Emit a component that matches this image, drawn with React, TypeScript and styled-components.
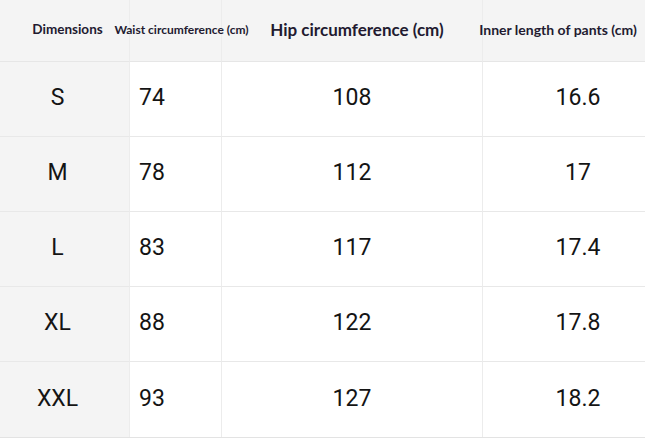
import { Fragment } from 'react'
import styled, { createGlobalStyle } from 'styled-components'

const Global = createGlobalStyle`
  html, body {
    margin: 0;
    padding: 0;
    background: #ffffff;
  }
`

const rows = [
  { size: 'S', waist: '74', hip: '108', inner: '16.6' },
  { size: 'M', waist: '78', hip: '112', inner: '17' },
  { size: 'L', waist: '83', hip: '117', inner: '17.4' },
  { size: 'XL', waist: '88', hip: '122', inner: '17.8' },
  { size: 'XXL', waist: '93', hip: '127', inner: '18.2' },
]

const Table = styled.div`
  width: 645px;
  display: grid;
  grid-template-columns: 130px 92px 261px 162px;
  grid-template-rows: 62px repeat(5, 75px);
  border-bottom: 1px solid #e3e3e3;
`

const Head = styled.div<{ $size: number; $shift?: number }>`
  background: #f4f4f4;
  border-bottom: 1px solid #e6e6e6;
  border-right: 1px solid #ececec;
  display: flex;
  align-items: center;
  justify-content: center;
  padding-bottom: 3px;
  font-family: Lato, 'Noto Sans', sans-serif;
  font-weight: 700;
  font-size: ${p => p.$size}px;
  color: #221a30;
  white-space: nowrap;
  overflow: visible;
  &:nth-child(4) {
    border-right: none;
  }
  span {
    position: relative;
    z-index: 1;
    left: ${p => p.$shift ?? 0}px;
  }
`

const Cell = styled.div<{ $shade?: boolean; $left?: boolean; $shift?: number }>`
  background: ${p => (p.$shade ? '#f4f4f4' : '#ffffff')};
  border-bottom: 1px solid #e8e8e8;
  border-right: 1px solid #ececec;
  display: flex;
  align-items: center;
  justify-content: ${p => (p.$left ? 'flex-start' : 'center')};
  padding-left: ${p => (p.$left ? 9 : 0)}px;
  padding-bottom: 3px;
  font-family: Roboto, 'Noto Sans', sans-serif;
  font-size: 23px;
  color: #141414;
  &:nth-last-child(-n + 4) {
    border-bottom: none;
  }
  &:nth-child(4n) {
    border-right: none;
  }
  span {
    position: relative;
    left: ${p => p.$shift ?? 0}px;
  }
`

export default function App() {
  return (
    <>
      <Global />
      <Table>
        <Head $size={13.5} $shift={3}><span>Dimensions</span></Head>
        <Head $size={12} $shift={6}><span>Waist circumference (cm)</span></Head>
        <Head $size={17} $shift={5}><span>Hip circumference (cm)</span></Head>
        <Head $size={14} $shift={-6}><span>Inner length of pants (cm)</span></Head>
        {rows.map(r => (
          <Fragment key={r.size}>
            <Cell $shade $shift={-7}><span>{r.size}</span></Cell>
            <Cell $left><span>{r.waist}</span></Cell>
            <Cell><span>{r.hip}</span></Cell>
            <Cell $shift={14}><span>{r.inner}</span></Cell>
          </Fragment>
        ))}
      </Table>
    </>
  )
}
